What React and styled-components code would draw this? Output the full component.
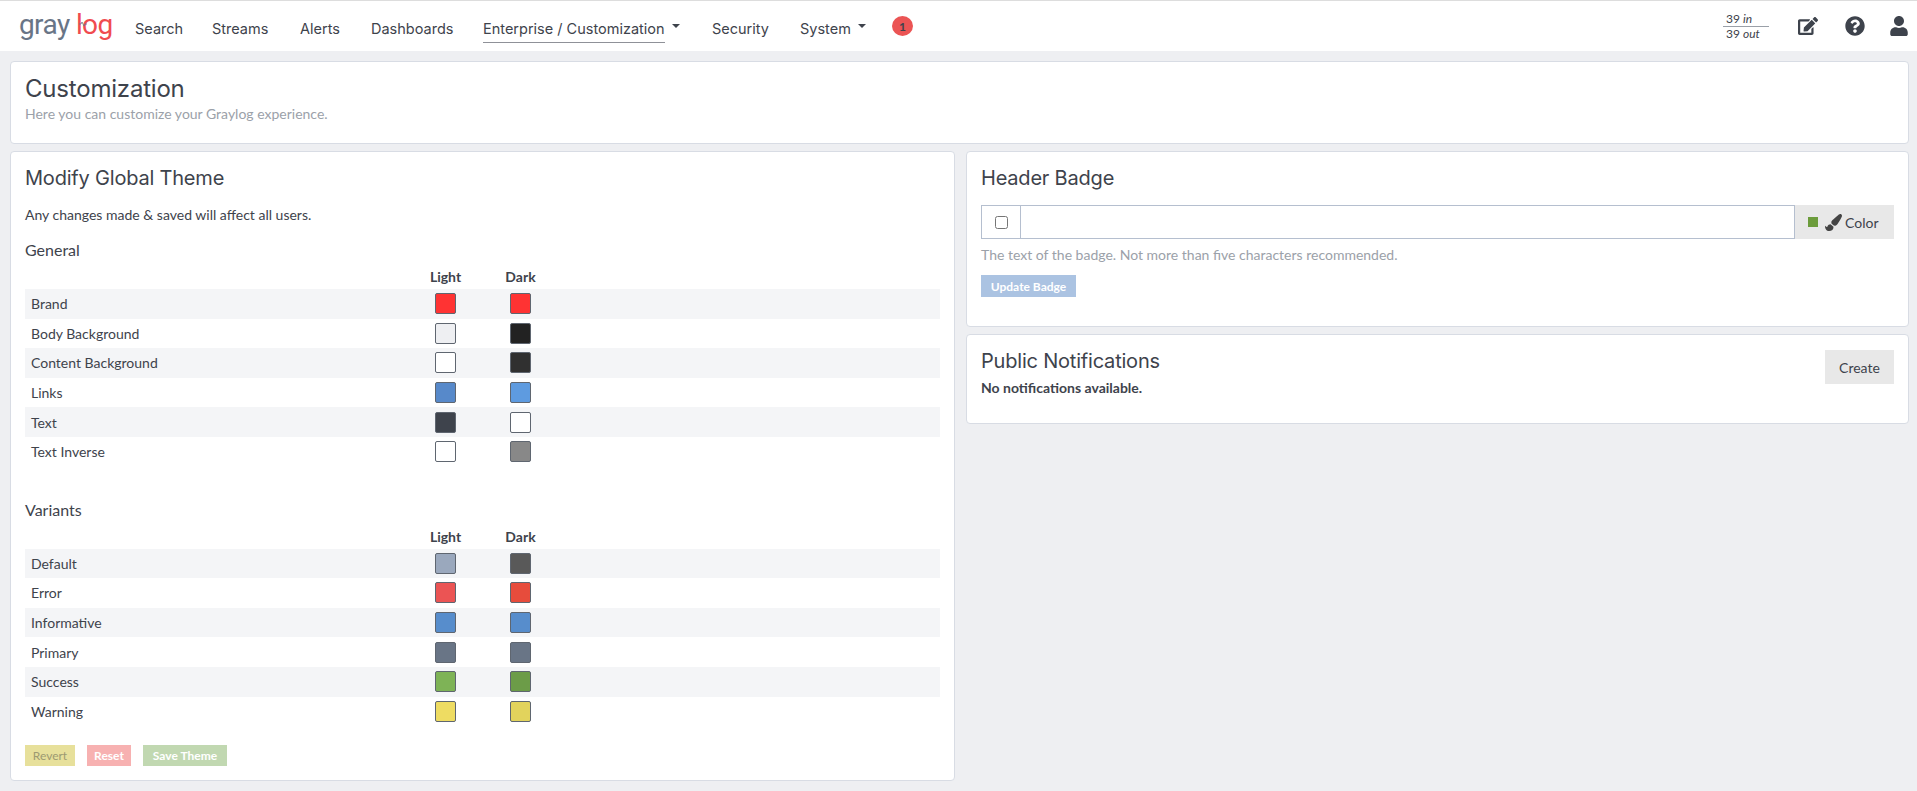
import React from 'react';
import styled, { createGlobalStyle } from 'styled-components';
import { FaEdit, FaQuestionCircle, FaUser, FaPaintBrush } from 'react-icons/fa';

const GlobalStyle = createGlobalStyle`
  html, body {
    margin: 0;
    padding: 0;
    background: #eeeff2;
    color: #3e434c;
    font-family: Lato, "Liberation Sans", sans-serif;
    font-size: 14px;
  }
  * {
    box-sizing: border-box;
  }
`;

const Navbar = styled.nav`
  display: flex;
  align-items: center;
  height: 51px;
  padding: 0 8px 0 19px;
  background: #fff;
  border-top: 1px solid #ddd;
`;

const Logo = styled.div`
  width: 116px;
  font-family: Roboto, sans-serif;
  font-size: 28px;
  line-height: 28px;
  letter-spacing: -0.6px;
  color: #697586;
  margin-top: -3px;
`;

const LogoRed = styled.span`
  position: relative;
  color: #f04b4f;
`;

const LogoWave = styled.svg`
  position: absolute;
  left: 9px;
  top: 13px;
  width: 8px;
  height: 6px;
`;

const NavItem = styled.a`
  display: flex;
  align-items: center;
  width: ${props => props.$w}px;
  font-family: Inter, sans-serif;
  font-size: 14.5px;
  color: #3e434c;
  white-space: nowrap;
`;

const NavLabel = styled.span`
  padding: 8px 0 5px;
  margin-top: 3px;
  border-bottom: 1px solid ${props => (props.$active ? '#8f9198' : 'transparent')};
`;

const Caret = styled.span`
  width: 0;
  height: 0;
  margin-left: 7px;
  border-top: 4px solid #3e434c;
  border-left: 4px solid transparent;
  border-right: 4px solid transparent;
`;

const CountBadge = styled.span`
  display: flex;
  align-items: center;
  justify-content: center;
  width: 21px;
  height: 20px;
  border-radius: 50%;
  background: #eb5454;
  color: #3e434c;
  font-family: "Source Sans Pro", Lato, sans-serif;
  font-size: 12px;
  font-weight: 700;
`;

const NavRight = styled.div`
  display: flex;
  align-items: center;
  margin-left: auto;
  color: #3e434c;
`;

const Throughput = styled.div`
  width: 46px;
  margin-right: 29px;
  font-size: 12px;
  line-height: 14px;
`;

const ThroughputLine = styled.div`
  padding-left: 3px;
  white-space: nowrap;
  border-bottom: ${props => (props.$top ? '1px solid #9aa0a8' : 'none')};
`;

const NavIcon = styled.span`
  display: flex;
  font-size: 20px;
  margin-right: ${props => props.$gap}px;
`;

const Page = styled.div`
  display: flex;
  flex-direction: column;
  gap: 7px;
  min-height: calc(100vh - 51px);
  padding: 10px 8px 10px 10px;
`;

const Card = styled.section`
  background: #fff;
  border: 1px solid #d8dce4;
  border-radius: 4px;
  padding: ${props => props.$pad || '12px 14px'};
  height: ${props => (props.$h ? `${props.$h}px` : 'auto')};
`;

const PageTitle = styled.h1`
  margin: 0;
  font-family: Inter, sans-serif;
  font-size: 24px;
  font-weight: 400;
  line-height: 30px;
  letter-spacing: -0.2px;
`;

const Muted = styled.div`
  margin-top: ${props => props.$top || 0}px;
  color: #9ba1a9;
  line-height: 20px;
`;

const Columns = styled.div`
  flex: 1;
  display: grid;
  grid-template-columns: 945px 1fr;
  gap: 11px;
`;

const Stack = styled.div`
  display: flex;
  flex-direction: column;
  gap: 7px;
`;

const CardTitle = styled.h2`
  margin: 0;
  font-family: Inter, sans-serif;
  font-size: 20px;
  font-weight: 400;
  line-height: 28px;
  letter-spacing: -0.2px;
`;

const Paragraph = styled.p`
  margin: 13px 0 0;
  line-height: 20px;
`;

const SectionTitle = styled.h3`
  margin: ${props => props.$top}px 0 0;
  font-size: 16px;
  font-weight: 400;
  line-height: 20px;
`;

const ColorGrid = styled.div`
  display: grid;
  grid-template-columns: 383px 75px 75px 1fr;
  margin-top: 7px;
`;

const HeadCell = styled.div`
  height: 22px;
  font-weight: 700;
  line-height: 20px;
  text-align: center;
`;

const Row = styled.div`
  display: grid;
  grid-column: 1 / -1;
  grid-template-columns: subgrid;
  align-items: center;
  height: 29.6px;
  background: ${props => (props.$striped ? '#f4f5f7' : '#fff')};
`;

const RowLabel = styled.div`
  padding-left: 6px;
`;

const Swatch = styled.span`
  justify-self: center;
  display: block;
  width: 21px;
  height: 21px;
  background: ${props => props.$color};
  border: 1px solid #5f6670;
  border-radius: 2px;
`;

const ButtonRow = styled.div`
  display: flex;
  gap: 12px;
  margin-top: 19px;
`;

const FlatButton = styled.button`
  height: ${props => props.$h || 21}px;
  width: ${props => props.$w}px;
  margin-top: ${props => props.$top || 0}px;
  padding: 0;
  border: none;
  background: ${props => props.$bg};
  color: ${props => props.$fg || '#fff'};
  font-family: Lato, sans-serif;
  font-size: 12px;
  font-weight: ${props => (props.$bold ? 700 : 400)};
`;

const InputGroup = styled.div`
  display: flex;
  height: 34px;
  margin-top: 13px;
`;

const Addon = styled.div`
  display: flex;
  align-items: center;
  justify-content: center;
  width: 39px;
  border: 1px solid #b5bfcf;
  border-right: none;
`;

const Checkbox = styled.input`
  width: 13px;
  height: 13px;
  margin: 0;
`;

const TextInput = styled.input`
  flex: 1;
  min-width: 0;
  border: 1px solid #b5bfcf;
  outline: none;
  background: #fff;
`;

const ColorButton = styled.button`
  display: flex;
  align-items: center;
  width: 99px;
  padding: 0 0 0 13px;
  border: none;
  background: #e8e8e8;
  color: #3e434c;
  font-family: Lato, sans-serif;
  font-size: 14px;
`;

const ColorDot = styled.span`
  width: 10px;
  height: 10px;
  margin-right: 7px;
  background: #6c9c3c;
`;

const BrushIcon = styled(FaPaintBrush)`
  width: 17px;
  height: 17px;
  margin-right: 3px;
  color: #444;
`;

const TitleRow = styled.div`
  display: flex;
  justify-content: space-between;
  align-items: flex-start;
`;

const CreateButton = styled.button`
  width: 69px;
  height: 34px;
  margin-top: 3px;
  padding: 0;
  border: none;
  background: #e8e8e8;
  color: #3e434c;
  font-family: Lato, sans-serif;
  font-size: 14px;
`;

const Strong = styled.div`
  margin-top: -6px;
  font-weight: 700;
  line-height: 20px;
`;

const general = [
  ['Brand', '#ff3333', '#ff3333'],
  ['Body Background', '#eeeff2', '#222222'],
  ['Content Background', '#ffffff', '#303030'],
  ['Links', '#5789ca', '#5e9be0'],
  ['Text', '#3e434c', '#ffffff'],
  ['Text Inverse', '#ffffff', '#888888'],
];

const variants = [
  ['Default', '#9aa8bd', '#595959'],
  ['Error', '#eb5454', '#e74c3c'],
  ['Informative', '#578dcc', '#578dcc'],
  ['Primary', '#697586', '#697586'],
  ['Success', '#7eb356', '#6c9c48'],
  ['Warning', '#eedc62', '#e2d35c'],
];

const nav = [
  ['Search', 77],
  ['Streams', 88],
  ['Alerts', 71],
  ['Dashboards', 112],
];

const ThemeTable = ({ rows }) => (
  <ColorGrid>
    <HeadCell />
    <HeadCell>Light</HeadCell>
    <HeadCell>Dark</HeadCell>
    <HeadCell />
    {rows.map(([label, light, dark], i) => (
      <Row key={label} $striped={i % 2 === 0}>
        <RowLabel>{label}</RowLabel>
        <Swatch $color={light} />
        <Swatch $color={dark} />
      </Row>
    ))}
  </ColorGrid>
);

const App = () => (
  <>
    <GlobalStyle />
    <Navbar>
      <Logo>
        gray
        <LogoRed>
          {' '}log
          <LogoWave viewBox="0 0 8 6">
            <path d="M0 3h2l1-2 2 4 1-2h2" fill="none" stroke="#697586" strokeWidth="0.8" />
          </LogoWave>
        </LogoRed>
      </Logo>
      {nav.map(([label, w]) => (
        <NavItem key={label} $w={w}>
          <NavLabel>{label}</NavLabel>
        </NavItem>
      ))}
      <NavItem $w={229}>
        <NavLabel $active>Enterprise / Customization</NavLabel>
        <Caret />
      </NavItem>
      <NavItem $w={88}>
        <NavLabel>Security</NavLabel>
      </NavItem>
      <NavItem $w={92}>
        <NavLabel>System</NavLabel>
        <Caret />
      </NavItem>
      <CountBadge>1</CountBadge>
      <NavRight>
        <Throughput>
          <ThroughputLine $top>39 <i>in</i></ThroughputLine>
          <ThroughputLine>39 <i>out</i></ThroughputLine>
        </Throughput>
        <NavIcon $gap={27}><FaEdit /></NavIcon>
        <NavIcon $gap={24}><FaQuestionCircle /></NavIcon>
        <NavIcon $gap={0}><FaUser /></NavIcon>
      </NavRight>
    </Navbar>
    <Page>
      <Card $h={83}>
        <PageTitle>Customization</PageTitle>
        <Muted>Here you can customize your Graylog experience.</Muted>
      </Card>
      <Columns>
        <Card>
          <CardTitle>Modify Global Theme</CardTitle>
          <Paragraph>Any changes made &amp; saved will affect all users.</Paragraph>
          <SectionTitle $top={15}>General</SectionTitle>
          <ThemeTable rows={general} />
          <SectionTitle $top={33}>Variants</SectionTitle>
          <ThemeTable rows={variants} />
          <ButtonRow>
            <FlatButton $w={50} $bg="#e7e09b" $fg="#9d9a72">Revert</FlatButton>
            <FlatButton $w={44} $bg="#f7b1b1" $bold>Reset</FlatButton>
            <FlatButton $w={84} $bg="#c1d8b1" $bold>Save Theme</FlatButton>
          </ButtonRow>
        </Card>
        <Stack>
          <Card $h={176}>
            <CardTitle>Header Badge</CardTitle>
            <InputGroup>
              <Addon><Checkbox type="checkbox" /></Addon>
              <TextInput type="text" />
              <ColorButton>
                <ColorDot />
                <BrushIcon />
                Color
              </ColorButton>
            </InputGroup>
            <Muted $top={6}>The text of the badge. Not more than five characters recommended.</Muted>
            <FlatButton $w={95} $h={22} $top={10} $bg="#abc3e2" $bold>Update Badge</FlatButton>
          </Card>
          <Card $h={90}>
            <TitleRow>
              <CardTitle>Public Notifications</CardTitle>
              <CreateButton>Create</CreateButton>
            </TitleRow>
            <Strong>No notifications available.</Strong>
          </Card>
        </Stack>
      </Columns>
    </Page>
  </>
);

export default App;
